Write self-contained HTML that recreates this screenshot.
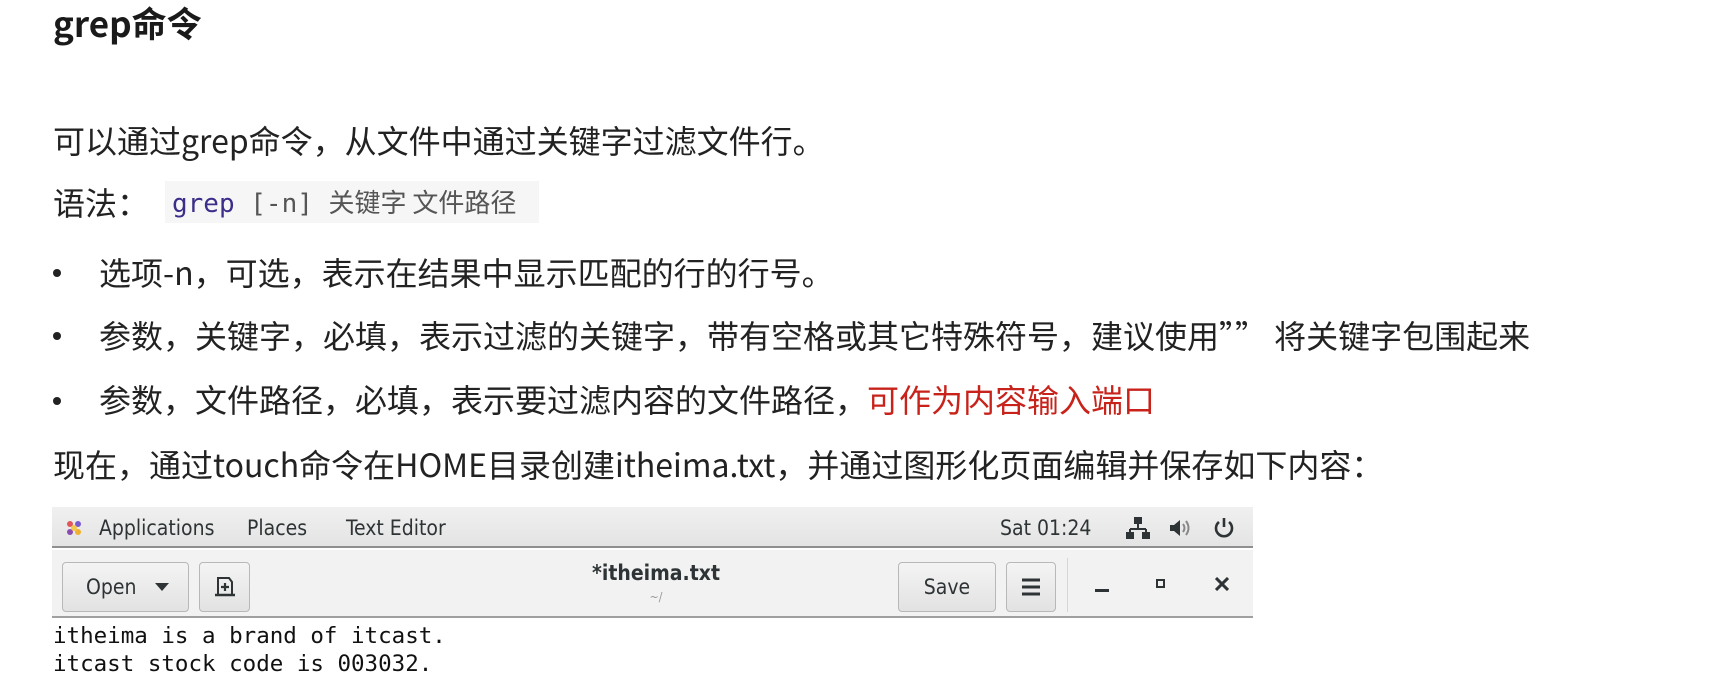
<!DOCTYPE html>
<html><head><meta charset="utf-8"><style>
*{margin:0;padding:0;box-sizing:border-box}
body{width:1715px;height:680px;background:#fff;position:relative;overflow:hidden;font-family:"Liberation Sans","Noto Sans CJK SC",sans-serif;color:#222}
.a{position:absolute;white-space:nowrap}
.cj{font-family:"Noto Sans CJK SC","Liberation Sans",sans-serif}
.t{font-size:32px;line-height:40px}
.dot{position:absolute;width:8px;height:8px;border-radius:50%;background:#222}
.btn{position:absolute;border:1px solid #b8b8b8;border-radius:4px;background:linear-gradient(#f4f4f4,#e2e2e2);top:562px;height:50px}
.ui{font-family:"DejaVu Sans Condensed","DejaVu Sans",sans-serif;color:#2e3436}
</style></head><body>
<div class="a cj" style="left:53px;top:1px;font-size:35px;font-weight:bold;line-height:44px;color:#1a1a1a">grep命令</div>
<div class="a cj t" style="left:53px;top:120px">可以通过grep命令，从文件中通过关键字过滤文件行。</div>
<div class="a cj t" style="left:53px;top:182px">语法：</div>
<div class="a" style="left:165px;top:181px;width:374px;height:42px;background:#f6f6f6"></div>
<div class="a" style="left:172px;top:184px;font-size:26px;line-height:36px;font-family:'DejaVu Sans Mono','Noto Sans CJK SC',monospace;color:#555"><span style="color:#3b2e8a">grep</span> [-n] <span class="cj">关键字 文件路径</span></div>
<div class="dot" style="left:53px;top:269px"></div>
<div class="a cj t" style="left:99px;top:252px">选项-n，可选，表示在结果中显示匹配的行的行号。</div>
<div class="dot" style="left:53px;top:332px"></div>
<div class="a cj t" style="left:99px;top:315px">参数，关键字，必填，表示过滤的关键字，带有空格或其它特殊符号，建议使用”” 将关键字包围起来</div>
<div class="dot" style="left:53px;top:397px"></div>
<div class="a cj t" style="left:99px;top:379px">参数，文件路径，必填，表示要过滤内容的文件路径，<span style="color:#c8231b">可作为内容输入端口</span></div>
<div class="a cj t" style="left:53px;top:444px">现在，通过touch命令在HOME目录创建itheima.txt，并通过图形化页面编辑并保存如下内容：</div>

<div class="a" style="left:52px;top:507px;width:1201px;height:41px;background:linear-gradient(#f0f0f0,#e4e4e4);border-bottom:2px solid #8f8f8f"></div>
<svg class="a" style="left:64px;top:518px" width="20" height="20" viewBox="0 0 20 20"><circle cx="6" cy="6" r="3" fill="#e0565b"/><circle cx="14" cy="6" r="3" fill="#7a5bd0"/><circle cx="6" cy="14" r="3" fill="#8a4cb0"/><circle cx="14" cy="14" r="3" fill="#f0b030"/><circle cx="10" cy="10" r="3" fill="#f4c84a"/></svg>
<div class="a ui" style="left:99px;top:514px;font-size:21px;line-height:28px">Applications</div>
<div class="a ui" style="left:247px;top:514px;font-size:21px;line-height:28px">Places</div>
<div class="a ui" style="left:346px;top:514px;font-size:21px;line-height:28px">Text Editor</div>
<div class="a ui" style="left:1000px;top:514px;font-size:21px;line-height:28px">Sat 01:24</div>
<svg class="a" style="left:1126px;top:517px" width="24" height="22" viewBox="0 0 24 22"><rect x="8" y="0" width="8" height="7" fill="#2e3436"/><path d="M12 7v5M4 12h16M4 12v3M20 12v3" stroke="#2e3436" stroke-width="2" fill="none"/><rect x="0" y="15" width="8" height="7" fill="#2e3436"/><rect x="16" y="15" width="8" height="7" fill="#2e3436"/></svg>
<svg class="a" style="left:1168px;top:518px" width="24" height="20" viewBox="0 0 24 20"><path d="M2 7h4l6-5v16l-6-5H2z" fill="#2e3436"/><path d="M15 6q3 4 0 8M18 3q5 7 0 14" stroke="#888" stroke-width="2" fill="none"/></svg>
<svg class="a" style="left:1212px;top:516px" width="24" height="24" viewBox="0 0 24 24"><path d="M7 6a8 8 0 1 0 10 0" stroke="#2e3436" stroke-width="2.6" fill="none"/><path d="M12 2v9" stroke="#2e3436" stroke-width="2.6"/></svg>

<div class="a" style="left:52px;top:550px;width:1201px;height:68px;background:#f2f2f2;border-bottom:2px solid #a0a0a0"></div>
<div class="btn" style="left:62px;width:127px"></div>
<div class="a ui" style="left:86px;top:573px;font-size:21px;line-height:28px">Open</div>
<svg class="a" style="left:155px;top:583px" width="14" height="8"><path d="M0 0h14L7 8z" fill="#2e3436"/></svg>
<div class="btn" style="left:199px;width:51px"></div>
<svg class="a" style="left:213px;top:575px" width="24" height="24" viewBox="0 0 24 24"><path d="M5 20V3h11l3 4v13" stroke="#2e3436" stroke-width="2" fill="none"/><path d="M2 20h20" stroke="#2e3436" stroke-width="2.5"/><path d="M12 8v8M8 12h8" stroke="#2e3436" stroke-width="2.2"/></svg>
<div class="a ui" style="left:556px;top:559px;width:200px;text-align:center;font-size:21px;font-weight:bold;line-height:28px">*itheima.txt</div>
<div class="a ui" style="left:556px;top:590px;width:200px;text-align:center;font-size:12px;color:#999">~/</div>
<div class="btn" style="left:898px;width:98px"></div>
<div class="a ui" style="left:898px;top:573px;width:98px;text-align:center;font-size:21px;line-height:28px">Save</div>
<div class="btn" style="left:1006px;width:50px"></div>
<svg class="a" style="left:1021px;top:578px" width="20" height="18"><path d="M1 2h18M1 9h18M1 16h18" stroke="#2e3436" stroke-width="3"/></svg>
<div class="a" style="left:1067px;top:558px;width:1px;height:54px;background:#d6d6d6"></div>
<div class="a" style="left:1095px;top:589px;width:14px;height:3px;background:#2e3436"></div>
<div class="a" style="left:1156px;top:579px;width:9px;height:9px;border:2.5px solid #2e3436"></div>
<svg class="a" style="left:1215px;top:577px" width="14" height="14"><path d="M1 1l12 12M13 1L1 13" stroke="#2e3436" stroke-width="3"/></svg>

<div class="a" style="left:53px;top:622px;font-family:'DejaVu Sans Mono','Liberation Mono',monospace;font-size:22.5px;line-height:28px;color:#111">itheima is a brand of itcast.<br>itcast stock code is 003032.</div>
</body></html>
